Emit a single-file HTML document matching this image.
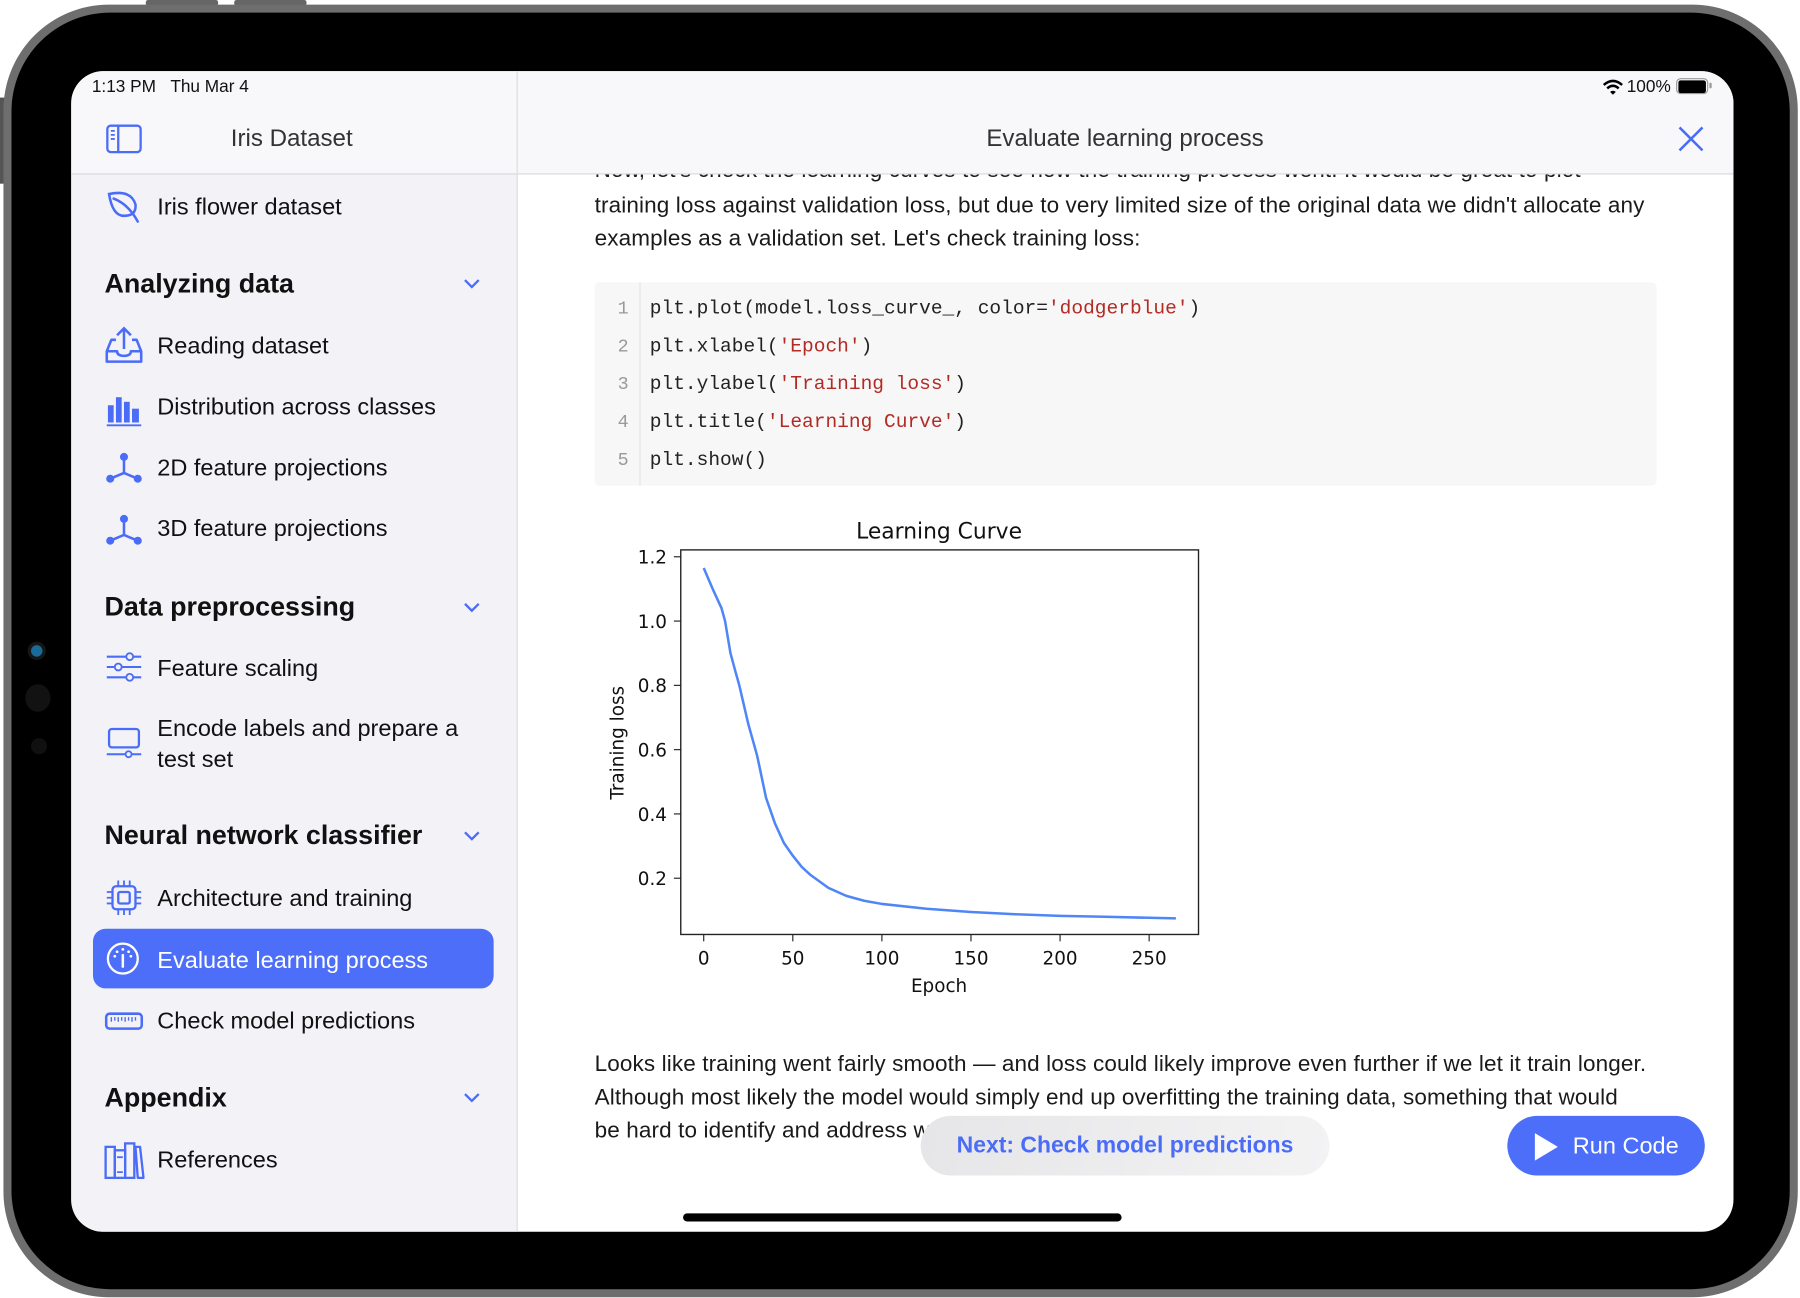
<!DOCTYPE html>
<html><head><meta charset="utf-8">
<style>
html,body{margin:0;padding:0;background:#fff;overflow:hidden;width:1800px;height:1298px}
#s{position:absolute;left:0;top:0;width:1568px;height:1131px;transform:scale(1.148);transform-origin:0 0;font-family:"Liberation Sans",sans-serif}
.a{position:absolute}
.dev{left:3px;top:4px;width:1563px;height:1126px;border-radius:92px;background:#6e6e6e}
.dev2{left:10px;top:11px;width:1549px;height:1112px;border-radius:86px;background:#000}
.scr{left:62px;top:62px;width:1448px;height:1011px;border-radius:28px;background:#fff;overflow:hidden}
.side{left:0;top:0;width:388px;height:1011px;background:#f2f2f7;border-right:1px solid #dcdce0}
.hdr{left:0;top:0;width:1448px;height:89px;background:#f8f8fa;border-bottom:1px solid #d9d9dd}
.t{position:absolute;white-space:nowrap;color:#111}
.item{font-size:20.5px}
.sec{font-size:23.4px;font-weight:bold}
.ic{position:absolute}
.body{font-size:19.6px;letter-spacing:0.1px;color:#1a1a1a}
.code{font-family:"Liberation Mono",monospace;font-size:17px;color:#222}
.str{color:#b22a24}
.ln{color:#999;font-family:"Liberation Mono",monospace;font-size:16px}
.chev{position:absolute}
</style></head><body>
<div id="s">
<div class="a" style="left:127px;top:0;width:63px;height:5px;background:#666;border-radius:2px"></div>
<div class="a" style="left:204px;top:0;width:63px;height:5px;background:#666;border-radius:2px"></div>
<div class="a" style="left:0;top:85px;width:5px;height:75px;background:#555"></div>
<div class="a dev"></div>
<div class="a dev2"></div>
<div class="a" style="left:27px;top:562px;width:10px;height:10px;border-radius:50%;background:#1a6a9a;box-shadow:0 0 0 3px #161616"></div>
<div class="a" style="left:22px;top:596px;width:22px;height:24px;border-radius:50%;background:#121212"></div>
<div class="a" style="left:27px;top:643px;width:14px;height:14px;border-radius:50%;background:#101010"></div>

<div class="a scr">
 <div class="t body" style="left:456px;top:75px">Now, let's check the learning curves to see how the training process went. It would be great to plot</div>
 <div class="t body" style="left:456px;top:106px">training loss against validation loss, but due to very limited size of the original data we didn't allocate any</div>
 <div class="t body" style="left:456px;top:135px">examples as a validation set. Let's check training loss:</div>

 <div class="a" style="left:456px;top:184px;width:925px;height:177px;background:#f7f7f7;border-radius:4px"></div>
 <div class="a" style="left:495px;top:184px;width:1px;height:177px;background:#e3e3e3"></div>
 <div class="t ln" style="left:476px;top:198px">1</div>
 <div class="t ln" style="left:476px;top:231px">2</div>
 <div class="t ln" style="left:476px;top:264px">3</div>
 <div class="t ln" style="left:476px;top:297px">4</div>
 <div class="t ln" style="left:476px;top:330px">5</div>
 <div class="t code" style="left:504px;top:198px">plt.plot(model.loss_curve_, color=<span class="str">'dodgerblue'</span>)</div>
 <div class="t code" style="left:504px;top:231px">plt.xlabel(<span class="str">'Epoch'</span>)</div>
 <div class="t code" style="left:504px;top:264px">plt.ylabel(<span class="str">'Training loss'</span>)</div>
 <div class="t code" style="left:504px;top:297px">plt.title(<span class="str">'Learning Curve'</span>)</div>
 <div class="t code" style="left:504px;top:330px">plt.show()</div>

 <svg class="a" style="left:0;top:0" width="1448" height="1011" viewBox="62 62 1448 1011">
  <g font-family="DejaVu Sans, sans-serif" fill="#111">
   <text x="818" y="469" font-size="19" text-anchor="middle">Learning Curve</text>
   <rect x="593" y="479" width="451" height="335" fill="none" stroke="#222" stroke-width="1.2"/>
   <g font-size="16" text-anchor="end">
    <text x="581" y="491">1.2</text><text x="581" y="547">1.0</text><text x="581" y="603">0.8</text>
    <text x="581" y="659">0.6</text><text x="581" y="715">0.4</text><text x="581" y="771">0.2</text>
   </g>
   <g stroke="#222" stroke-width="1">
    <line x1="587" y1="485" x2="593" y2="485"/><line x1="587" y1="541" x2="593" y2="541"/>
    <line x1="587" y1="597" x2="593" y2="597"/><line x1="587" y1="653" x2="593" y2="653"/>
    <line x1="587" y1="709" x2="593" y2="709"/><line x1="587" y1="765" x2="593" y2="765"/>
    <line x1="613" y1="814" x2="613" y2="820"/><line x1="690.6" y1="814" x2="690.6" y2="820"/>
    <line x1="768.2" y1="814" x2="768.2" y2="820"/><line x1="845.8" y1="814" x2="845.8" y2="820"/>
    <line x1="923.4" y1="814" x2="923.4" y2="820"/><line x1="1001" y1="814" x2="1001" y2="820"/>
   </g>
   <g font-size="16" text-anchor="middle">
    <text x="613" y="840">0</text><text x="690.6" y="840">50</text><text x="768.2" y="840">100</text>
    <text x="845.8" y="840">150</text><text x="923.4" y="840">200</text><text x="1001" y="840">250</text>
    <text x="818" y="864">Epoch</text>
   </g>
   <text transform="translate(543,647) rotate(-90)" font-size="16" text-anchor="middle">Training loss</text>
  </g>
  <polyline fill="none" stroke="#4f86f7" stroke-width="2.2" stroke-linejoin="round" points="613,494.8 620.8,513 628.5,529.8 631.6,541 636.3,569 640.9,586 644,597 651.8,630.6 656.5,647.4 659.6,658.6 667.3,695 675.1,717.4 682.8,734.2 690.6,745.4 698.4,755.2 706.1,762.2 721.6,773.4 737.2,780.4 752.7,784.6 768.2,787.4 807,791.6 845.8,794.4 884.6,796.4 923.4,797.8 962.2,798.6 1024.3,800"/>
 </svg>

 <div class="t body" style="left:456px;top:854px">Looks like training went fairly smooth — and loss could likely improve even further if we let it train longer.</div>
 <div class="t body" style="left:456px;top:883px">Although most likely the model would simply end up overfitting the training data, something that would</div>
 <div class="t body" style="left:456px;top:912px">be hard to identify and address w</div>

 <div class="a" style="left:740px;top:910px;width:356px;height:52px;border-radius:26px;background:linear-gradient(100deg,#e6e6e8,#f3f3f4);"></div>
 <div class="t" style="left:740px;top:925px;width:356px;text-align:center;font-size:20px;font-weight:bold;color:#4a6cf7">Next: Check model predictions</div>
 <div class="a" style="left:1251px;top:910px;width:172px;height:52px;border-radius:26px;background:#4c6ef8"></div>
 <svg class="a" style="left:1273px;top:923px" width="24" height="28"><path d="M2 2 L22 14 L2 26 Z" fill="#fff"/></svg>
 <div class="t" style="left:1308px;top:925px;font-size:20.5px;color:#fff">Run Code</div>
 <div class="a" style="left:533px;top:995px;width:382px;height:7px;border-radius:4px;background:#000"></div>

 <div class="a hdr"></div>
 <div class="t" style="left:18px;top:5px;font-size:15px">1:13 PM&nbsp;&nbsp;&nbsp;Thu Mar 4</div>
 <svg class="a" style="left:1333px;top:6px" width="20" height="16" viewBox="0 0 20 16"><path d="M2 6 Q10 -1 18 6" stroke="#000" stroke-width="2.2" fill="none"/><path d="M5 9 Q10 4.5 15 9" stroke="#000" stroke-width="2.2" fill="none"/><path d="M7.5 12 L10 14.5 L12.5 12 Q10 10 7.5 12Z" fill="#000"/></svg>
 <div class="t" style="left:1355px;top:5px;font-size:15px">100%</div>
 <div class="a" style="left:1398px;top:6px;width:26px;height:12px;border:1.5px solid #999;border-radius:4px;"></div>
 <div class="a" style="left:1400px;top:8px;width:24px;height:11px;background:#000;border-radius:2px"></div>
 <div class="a" style="left:1427px;top:10px;width:2px;height:5px;background:#999;border-radius:1px"></div>
 <div class="a" style="left:388px;top:0;width:1px;height:89px;background:#dcdce0"></div>
 <div class="t" style="left:388px;top:47px;width:1060px;text-align:center;font-size:21px;color:#333">Evaluate learning process</div>
 <svg class="a" style="left:1399px;top:47px" width="24" height="24"><path d="M2 2 L22 22 M22 2 L2 22" stroke="#4a6cf7" stroke-width="2.2" fill="none"/></svg>
 <div class="t" style="left:139px;top:47px;font-size:21px;color:#333">Iris Dataset</div>
 <svg class="a" style="left:30px;top:46px" width="32" height="26" viewBox="0 0 32 26"><rect x="1.5" y="1.5" width="29" height="23" rx="3" fill="none" stroke="#4a6cf7" stroke-width="2"/><path d="M11 1.5 V24.5" stroke="#4a6cf7" stroke-width="2"/><path d="M4.5 6 H8 M4.5 9.5 H8 M4.5 13 H8" stroke="#4a6cf7" stroke-width="1.6"/></svg>

 <div class="a side" style="top:90px;height:921px"></div>
 <svg class="ic" style="left:30px;top:104px" width="34" height="30" viewBox="0 0 34 30"><path d="M3 3 Q22 -1 26 12 Q27 22 16 22 Q6 22 3 3Z" fill="none" stroke="#4a6cf7" stroke-width="2.2"/><path d="M7 7 Q20 12 28 27" fill="none" stroke="#4a6cf7" stroke-width="2.2" stroke-linecap="round"/></svg>
 <div class="t item" style="left:75px;top:107px">Iris flower dataset</div>

 <div class="t sec" style="left:29px;top:172px">Analyzing data</div>
 <svg class="chev" style="left:341px;top:179px" width="16" height="12"><path d="M2 3 L8 9 L14 3" stroke="#4a6cf7" stroke-width="2" fill="none"/></svg>
 <svg class="ic" style="left:29px;top:222px" width="34" height="34" viewBox="0 0 34 34"><path d="M17 2 V20 M11 8 L17 2 L23 8" stroke="#4a6cf7" stroke-width="2.2" fill="none"/><path d="M10 12 H6 L2 22 V31 H32 V22 L28 12 H24 M2 22 H11 Q11 26 17 26 Q23 26 23 22 H32" stroke="#4a6cf7" stroke-width="2.2" fill="none" stroke-linejoin="round"/></svg>
 <div class="t item" style="left:75px;top:228px">Reading dataset</div>

 <svg class="ic" style="left:30px;top:280px" width="32" height="30" viewBox="0 0 32 30"><rect x="2" y="11" width="5" height="15" fill="#4a6cf7"/><rect x="9" y="4" width="5" height="22" fill="#4a6cf7"/><rect x="16" y="8" width="5" height="18" fill="#4a6cf7"/><rect x="23" y="14" width="6" height="12" fill="#4a6cf7"/><path d="M1 28.5 H31" stroke="#4a6cf7" stroke-width="1.6"/></svg>
 <div class="t item" style="left:75px;top:281px">Distribution across classes</div>

 <svg class="ic" style="left:30px;top:332px" width="32" height="30" viewBox="0 0 32 30"><circle cx="16" cy="4" r="3.5" fill="#4a6cf7"/><circle cx="4" cy="23" r="3.5" fill="#4a6cf7"/><circle cx="28" cy="23" r="3.5" fill="#4a6cf7"/><path d="M16 4 V18 L4 23 M16 18 L28 23" stroke="#4a6cf7" stroke-width="2.2" fill="none"/></svg>
 <div class="t item" style="left:75px;top:334px">2D feature projections</div>
 <svg class="ic" style="left:30px;top:386px" width="32" height="30" viewBox="0 0 32 30"><circle cx="16" cy="4" r="3.5" fill="#4a6cf7"/><circle cx="4" cy="23" r="3.5" fill="#4a6cf7"/><circle cx="28" cy="23" r="3.5" fill="#4a6cf7"/><path d="M16 4 V18 L4 23 M16 18 L28 23" stroke="#4a6cf7" stroke-width="2.2" fill="none"/></svg>
 <div class="t item" style="left:75px;top:387px">3D feature projections</div>

 <div class="t sec" style="left:29px;top:453px">Data preprocessing</div>
 <svg class="chev" style="left:341px;top:461px" width="16" height="12"><path d="M2 3 L8 9 L14 3" stroke="#4a6cf7" stroke-width="2" fill="none"/></svg>
 <svg class="ic" style="left:30px;top:506px" width="32" height="28" viewBox="0 0 32 28"><path d="M1 4 H31 M1 13 H31 M1 22 H31" stroke="#4a6cf7" stroke-width="1.8"/><circle cx="21" cy="4" r="3" fill="#f2f2f7" stroke="#4a6cf7" stroke-width="1.6"/><circle cx="11" cy="13" r="3" fill="#f2f2f7" stroke="#4a6cf7" stroke-width="1.6"/><circle cx="21" cy="22" r="3" fill="#f2f2f7" stroke="#4a6cf7" stroke-width="1.6"/></svg>
 <div class="t item" style="left:75px;top:509px">Feature scaling</div>
 <svg class="ic" style="left:30px;top:570px" width="32" height="30" viewBox="0 0 32 30"><rect x="3" y="3" width="26" height="16" rx="2.5" fill="none" stroke="#4a6cf7" stroke-width="2"/><path d="M1 25 H31" stroke="#4a6cf7" stroke-width="1.8"/><circle cx="20" cy="25" r="2.6" fill="#f2f2f7" stroke="#4a6cf7" stroke-width="1.6"/></svg>
 <div class="t item" style="left:75px;top:561px">Encode labels and prepare a</div>
 <div class="t item" style="left:75px;top:588px">test set</div>

 <div class="t sec" style="left:29px;top:652px">Neural network classifier</div>
 <svg class="chev" style="left:341px;top:660px" width="16" height="12"><path d="M2 3 L8 9 L14 3" stroke="#4a6cf7" stroke-width="2" fill="none"/></svg>
 <svg class="ic" style="left:30px;top:704px" width="32" height="32" viewBox="0 0 32 32"><rect x="6" y="6" width="20" height="20" rx="3" fill="none" stroke="#4a6cf7" stroke-width="2"/><rect x="11" y="11" width="10" height="10" rx="1.5" fill="none" stroke="#4a6cf7" stroke-width="2"/><path d="M11 1 V6 M16 1 V6 M21 1 V6 M11 26 V31 M16 26 V31 M21 26 V31 M1 11 H6 M1 16 H6 M1 21 H6 M26 11 H31 M26 16 H31 M26 21 H31" stroke="#4a6cf7" stroke-width="1.6"/></svg>
 <div class="t item" style="left:75px;top:709px">Architecture and training</div>

 <div class="a" style="left:19px;top:747px;width:349px;height:52px;border-radius:11px;background:#4c6ef8"></div>
 <svg class="ic" style="left:30px;top:758px" width="30" height="30" viewBox="0 0 30 30"><circle cx="15" cy="15" r="13" fill="none" stroke="#fff" stroke-width="2"/><path d="M15 12 V22" stroke="#fff" stroke-width="2.2" stroke-linecap="round"/><circle cx="15" cy="7" r="1.2" fill="#fff"/><circle cx="10" cy="9" r="1.2" fill="#fff"/><circle cx="20" cy="9" r="1.2" fill="#fff"/><circle cx="8" cy="13" r="1.2" fill="#fff"/><circle cx="22" cy="13" r="1.2" fill="#fff"/></svg>
 <div class="t item" style="left:75px;top:763px;color:#fff">Evaluate learning process</div>

 <svg class="ic" style="left:29px;top:818px" width="34" height="20" viewBox="0 0 34 20"><rect x="1.5" y="3" width="31" height="13" rx="3" fill="none" stroke="#4a6cf7" stroke-width="2.2"/><path d="M6 6 V10 M9 6 V9 M12 6 V10 M15 6 V9 M18 6 V10 M21 6 V9 M24 6 V10 M27 6 V9" stroke="#4a6cf7" stroke-width="1.2"/></svg>
 <div class="t item" style="left:75px;top:816px">Check model predictions</div>

 <div class="t sec" style="left:29px;top:881px">Appendix</div>
 <svg class="chev" style="left:341px;top:888px" width="16" height="12"><path d="M2 3 L8 9 L14 3" stroke="#4a6cf7" stroke-width="2" fill="none"/></svg>
 <svg class="ic" style="left:28px;top:932px" width="36" height="34" viewBox="0 0 36 34"><rect x="2" y="5" width="8" height="27" fill="none" stroke="#4a6cf7" stroke-width="2"/><rect x="10" y="8" width="9" height="24" fill="none" stroke="#4a6cf7" stroke-width="2"/><path d="M12 14 H17 M12 27 H17" stroke="#4a6cf7" stroke-width="1.6"/><rect x="19" y="2" width="8" height="30" fill="none" stroke="#4a6cf7" stroke-width="2"/><path d="M28 5 L32 5 L35 32 L30 32 Z" fill="none" stroke="#4a6cf7" stroke-width="2" stroke-linejoin="round"/></svg>
 <div class="t item" style="left:75px;top:937px">References</div>
</div>
</div>
</body></html>
